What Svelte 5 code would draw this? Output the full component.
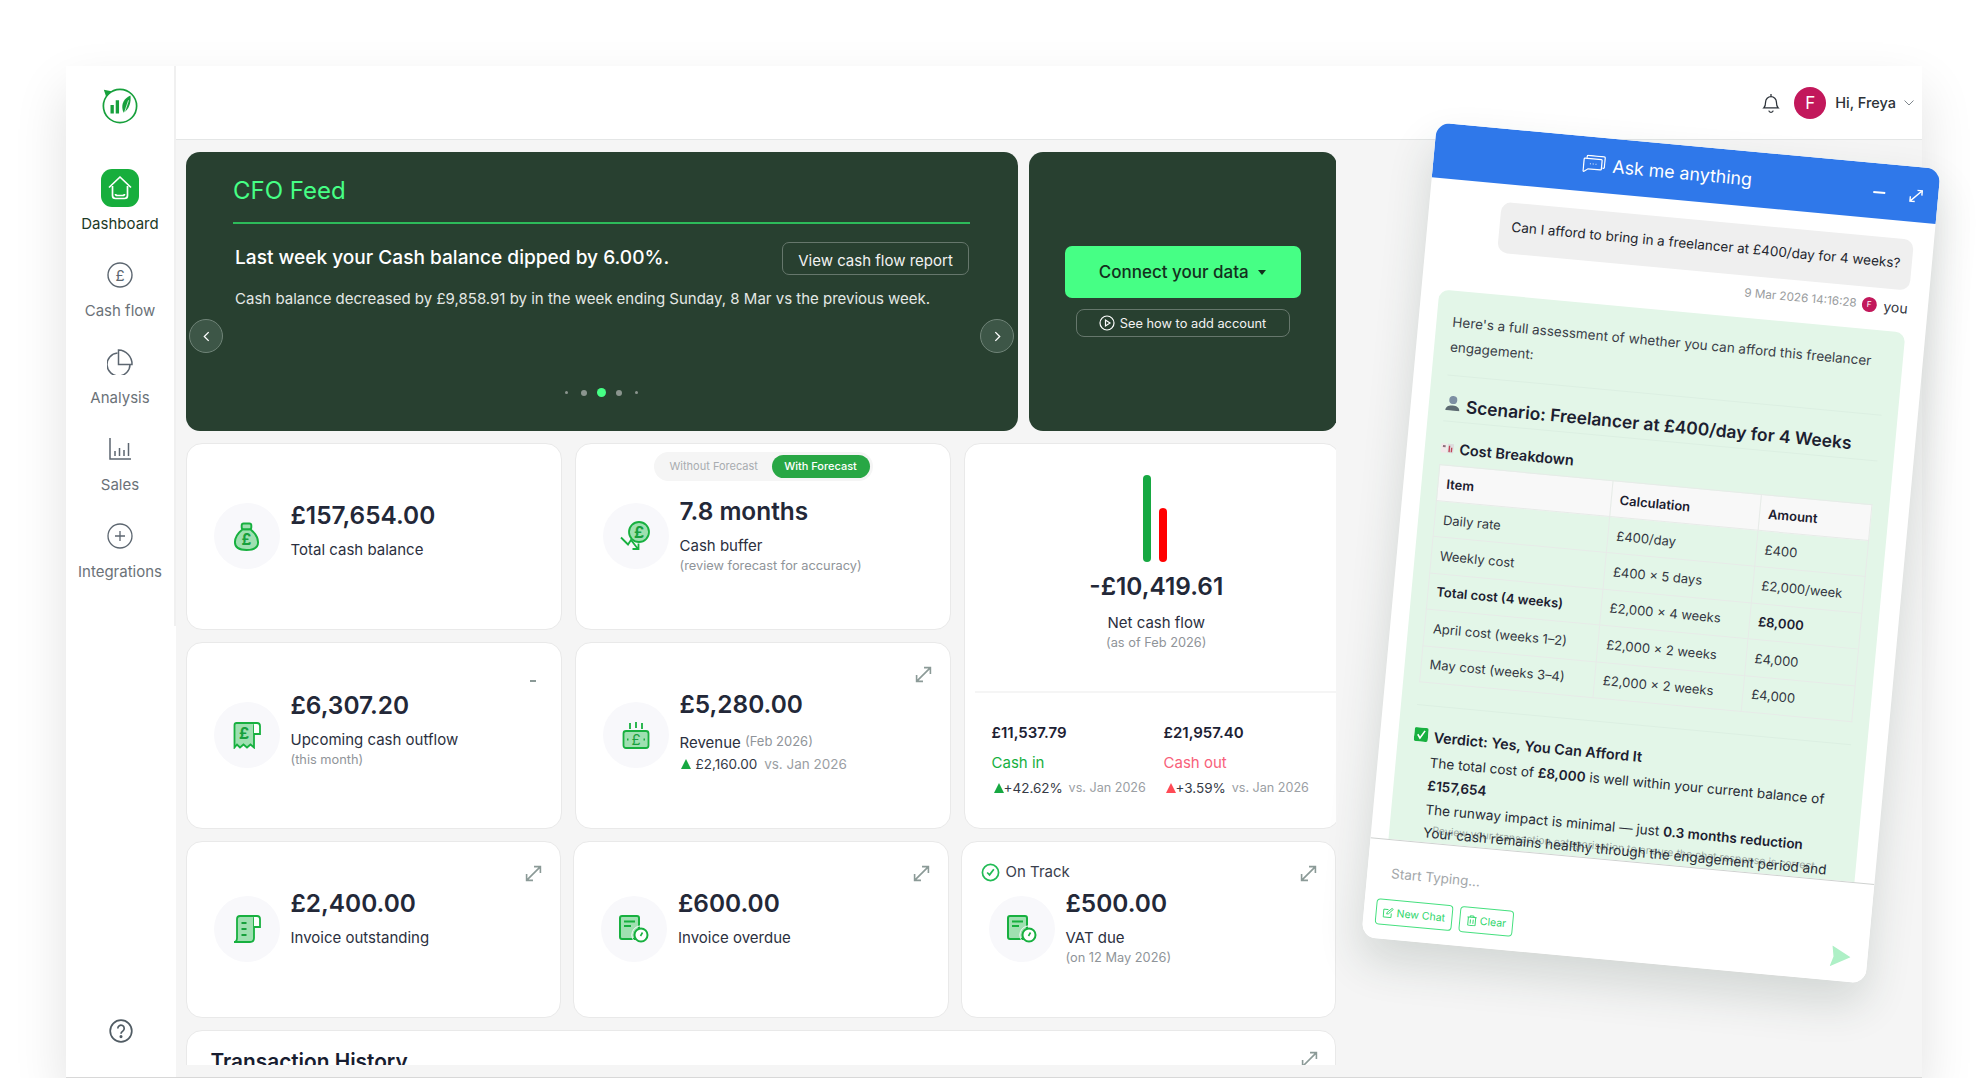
<script>
  const nav = [
    { label: 'Dashboard', icon: 'home', active: true },
    { label: 'Cash flow', icon: 'pound' },
    { label: 'Analysis', icon: 'pie' },
    { label: 'Sales', icon: 'bars' },
    { label: 'Integrations', icon: 'plus' }
  ];

  const costRows = [
    { item: 'Daily rate', calc: '£400/day', amount: '£400' },
    { item: 'Weekly cost', calc: '£400 × 5 days', amount: '£2,000/week' },
    { item: 'Total cost (4 weeks)', calc: '£2,000 × 4 weeks', amount: '£8,000', strong: true },
    { item: 'April cost (weeks 1–2)', calc: '£2,000 × 2 weeks', amount: '£4,000' },
    { item: 'May cost (weeks 3–4)', calc: '£2,000 × 2 weeks', amount: '£4,000' }
  ];

  const dots = ['s', 'm', 'on', 'm', 's'];
</script>

{#snippet expand()}
  <svg class="expand" viewBox="0 0 16 16" width="17" height="17" fill="none" stroke="#8b9a97" stroke-width="1.5">
    <path d="M1.5 14.5 14.5 1.5M8.5 1.5h6v6M1.5 8.5v6h6" />
  </svg>
{/snippet}

{#snippet docClock()}
  <svg viewBox="0 0 30 28" width="30" height="28" fill="none">
    <rect x="1" y="1" width="19" height="23" rx="2" fill="#9fe0b1" stroke="#17b03f" stroke-width="2" />
    <path d="M5 6.5h11M5 11h7" stroke="#17b03f" stroke-width="2" />
    <circle cx="22" cy="20" r="6.5" fill="#fff" stroke="#17b03f" stroke-width="2" />
    <circle cx="22" cy="20" r="9.2" stroke="#f8f8fb" stroke-width="1" />
    <path d="M21.5 21 23.5 17.5" stroke="#17b03f" stroke-width="1.6" />
  </svg>
{/snippet}

<div class="page">
  <div class="app">
    <aside class="side">
      <div class="rail">
        <svg class="logo" viewBox="0 0 40 40" width="38" height="38" fill="none">
          <circle cx="20" cy="20" r="17.5" stroke="#17a03c" stroke-width="1.8" />
          <path d="M3 3 11 4.5 5.5 10.5Z" fill="#17a03c" />
          <path d="M10 19h3.500v9H10zM15.500 14H19v14h-3.500z" fill="#17a03c" />
          <path d="M31 9c-7 3-10 9-8 16l1 2c5-3 8-10 7-18Z" fill="#17a03c" />
          <path d="M23 32 29 14" stroke="#fff" stroke-width=".8" />
        </svg>
        <nav class="nav">
          {#each nav as n}
            <div class="nav-item" class:active={n.active}>
              <div class="nav-icon">
                {#if n.icon === 'home'}
                  <svg viewBox="0 0 26 26" width="26" height="26" fill="none" stroke="#fff" stroke-width="1.7" stroke-linejoin="round">
                    <path d="M2 12.500 13 2l11 10.500" />
                    <path d="M5.500 11v9.500q0 3 3 3h9q3 0 3-3V11M8.500 19q0 1.500 2 1.500h5q2 0 2-1.500" />
                  </svg>
                {:else if n.icon === 'pound'}
                  <svg viewBox="0 0 26 26" width="26" height="26" fill="none" stroke="#5c6670" stroke-width="1.4">
                    <circle cx="13" cy="13" r="12" />
                    <text x="13" y="18.500" text-anchor="middle" class="svg-pound" fill="#5c6670" stroke="none">£</text>
                  </svg>
                {:else if n.icon === 'pie'}
                  <svg viewBox="0 0 26 26" width="26" height="26" fill="none" stroke="#5c6670" stroke-width="1.5">
                    <path d="M10.500 4A11.500 11.500 0 1 0 23 15.500" />
                    <path d="M11.500 1v14.500H25A14 14 0 0 0 11.500 1Z" />
                  </svg>
                {:else if n.icon === 'bars'}
                  <svg viewBox="0 0 24 24" width="24" height="24" fill="none" stroke="#5c6670" stroke-width="1.5">
                    <path d="M2 1v21h21M7 14v5M11.500 11v8M16 13v6M20.500 6v13" />
                  </svg>
                {:else}
                  <svg viewBox="0 0 26 26" width="26" height="26" fill="none" stroke="#5c6670" stroke-width="1.3">
                    <circle cx="13" cy="13" r="12" />
                    <path d="M13 8v10M8 13h10" />
                  </svg>
                {/if}
              </div>
              <span>{n.label}</span>
            </div>
          {/each}
        </nav>
      </div>
      <svg class="help" viewBox="0 0 24 24" width="24" height="24" fill="none" stroke="#515c64" stroke-width="1.7">
        <circle cx="12" cy="12" r="10.800" />
        <path d="M8.800 9.500a3.200 3.200 0 1 1 5 2.600c-1.100.8-1.800 1.300-1.800 2.600" />
        <circle cx="12" cy="17.600" r=".7" fill="#515c64" />
      </svg>
    </aside>

    <div class="main">
      <header class="top">
        <svg viewBox="0 0 20 22" width="18" height="20" fill="none" stroke="#2b3138" stroke-width="1.4">
          <path d="M2 16.500c1.500-1.500 2-3 2-6.500a6 6 0 0 1 12 0c0 3.500.5 5 2 6.500ZM10 1v3M7.500 19.500a2.600 2.600 0 0 0 5 0" />
        </svg>
        <div class="avatar">F</div>
        <span class="hi">Hi, Freya</span>
        <svg viewBox="0 0 10 6" width="10" height="6" fill="none" stroke="#7f878d" stroke-width="1">
          <path d="M.5.5 5 5 9.500.5" />
        </svg>
      </header>

      <div class="content">
        <div class="hero">
          <section class="feed">
            <h2>CFO Feed</h2>
            <div class="feed-head">
              <h3>Last week your Cash balance dipped by 6.00%.</h3>
              <button class="ghost">View cash flow report</button>
            </div>
            <p class="feed-text">Cash balance decreased by £9,858.91 by in the week ending Sunday, 8 Mar vs the previous week.</p>
            <div class="dots">
              {#each dots as d}
                <i class={d}></i>
              {/each}
            </div>
            <button class="arrow prev" aria-label="Previous">
              <svg viewBox="0 0 8 12" width="7" height="11" fill="none" stroke="#fff" stroke-width="1.500"><path d="M6.500 1 1.500 6l5 5" /></svg>
            </button>
            <button class="arrow next" aria-label="Next">
              <svg viewBox="0 0 8 12" width="7" height="11" fill="none" stroke="#fff" stroke-width="1.500"><path d="m1.500 1 5 5-5 5" /></svg>
            </button>
          </section>
          <section class="connect">
            <button class="connect-btn">Connect your data <i class="caret"></i></button>
            <button class="howto">
              <svg viewBox="0 0 16 16" width="16" height="16" fill="none" stroke="#fff" stroke-width="1.200">
                <circle cx="8" cy="8" r="7" />
                <path d="M6.500 5v6L11 8Z" />
              </svg>
              See how to add account
            </button>
          </section>
        </div>

        <div class="grid">
          <div class="card stat">
            <div class="circle">
              <svg viewBox="0 0 28 30" width="27" height="29" fill="none" stroke="#17b03f" stroke-width="2">
                <path d="M10 7.500C5 11.500 2 16 2 21c0 6 4 8 12 8s12-2 12-8c0-5-3-9.500-8-13.500Z" fill="#9fe0b1" />
                <rect x="9" y="1.500" width="10" height="6" rx="2" fill="#9fe0b1" />
                <text x="14" y="24" text-anchor="middle" class="svg-pound-b" fill="#17a03c" stroke="none">£</text>
              </svg>
            </div>
            <div class="txt pb11">
              <div class="amount">£157,654.00</div>
              <div class="label">Total cash balance</div>
            </div>
          </div>

          <div class="card stat">
            <div class="toggle">
              <span>Without Forecast</span>
              <span class="on">With Forecast</span>
            </div>
            <div class="circle">
              <svg viewBox="0 0 31 30" width="31" height="30" fill="none" stroke="#17b03f" stroke-width="1.800">
                <circle cx="19" cy="11" r="10" fill="#9fe0b1" />
                <text x="19" y="17" text-anchor="middle" class="svg-pound-b" fill="#17a03c" stroke="none">£</text>
                <path d="M1 16.500 8 23.500 11 19 18 28M12.500 28H18.500V22.500" />
              </svg>
            </div>
            <div class="txt pb3">
              <div class="amount">7.8 months</div>
              <div class="label">Cash buffer</div>
              <div class="sub">(review forecast for accuracy)</div>
            </div>
          </div>

          <div class="card net">
            <div class="net-top">
              <div class="candles">
                <i class="g"></i>
                <i class="r"></i>
              </div>
              <div class="amount">-£10,419.61</div>
              <div class="label">Net cash flow</div>
              <div class="sub">(as of Feb 2026)</div>
            </div>
            <div class="net-bottom">
              <div>
                <b>£11,537.79</b>
                <div class="flow in">Cash in</div>
                <div class="chg"><i class="up"></i>+42.62% <em>vs. Jan 2026</em></div>
              </div>
              <div>
                <b>£21,957.40</b>
                <div class="flow out">Cash out</div>
                <div class="chg"><i class="up red"></i>+3.59% <em>vs. Jan 2026</em></div>
              </div>
            </div>
          </div>

          <div class="card stat">
            <span class="dash"></span>
            <div class="circle">
              <svg viewBox="0 0 28 27" width="28" height="27" fill="none" stroke="#17b03f" stroke-width="1.800">
                <path d="M1.500 25.500V3q0-2 2-2H24q-3 0-3 3.500v21l-3.500-3-3.500 3-3.500-3-3.500 3-3-3Z" fill="#9fe0b1" />
                <path d="M21 1h3q3 0 3 3v8h-6" fill="#fff" />
                <text x="11" y="17" text-anchor="middle" class="svg-pound-b" fill="#17a03c" stroke="none">£</text>
              </svg>
            </div>
            <div class="txt pb13">
              <div class="amount">£6,307.20</div>
              <div class="label">Upcoming cash outflow</div>
              <div class="sub">(this month)</div>
            </div>
          </div>

          <div class="card stat">
            {@render expand()}
            <div class="circle">
              <svg viewBox="0 0 28 27" width="28" height="27" fill="none" stroke="#17b03f" stroke-width="1.800">
                <path d="M8 1v6M14 0v6M20 1v6" />
                <rect x="1.500" y="9" width="25" height="17" rx="2.500" fill="#9fe0b1" />
                <text x="14" y="22.500" text-anchor="middle" class="svg-pound" fill="#17a03c" stroke="none">£</text>
                <path d="M5 17.500h1.500M21.500 17.500H23" stroke-width="2" />
              </svg>
            </div>
            <div class="txt pb8">
              <div class="amount">£5,280.00</div>
              <div class="label rev">Revenue <span>(Feb 2026)</span></div>
              <div class="chg"><i class="up"></i>£2,160.00 <em>vs. Jan 2026</em></div>
            </div>
          </div>
        </div>

        <div class="row3">
          <div class="card stat">
            {@render expand()}
            <div class="circle">
              <svg viewBox="0 0 28 28" width="28" height="28" fill="none" stroke="#17b03f" stroke-width="1.800">
                <path d="M4 4q0-3 3-3h17q-3 0-3 3v19q0 4-4 4H1q3 0 3-4Z" fill="#9fe0b1" />
                <path d="M21 1h3q3 0 3 3v8h-6" fill="#fff" />
                <path d="M8.500 8h5M8.500 14h5M8.500 20h5" stroke="#17a03c" stroke-width="2" />
              </svg>
            </div>
            <div class="txt pb22">
              <div class="amount">£2,400.00</div>
              <div class="label">Invoice outstanding</div>
            </div>
          </div>

          <div class="card stat">
            {@render expand()}
            <div class="circle">{@render docClock()}</div>
            <div class="txt pb22">
              <div class="amount">£600.00</div>
              <div class="label">Invoice overdue</div>
            </div>
          </div>

          <div class="card stat">
            <div class="track">
              <svg viewBox="0 0 20 20" width="19" height="19" fill="none" stroke="#22bb55" stroke-width="1.800">
                <circle cx="10" cy="10" r="8.500" />
                <path d="M6.500 10 9 12.500 13.500 6.500" />
              </svg>
              On Track
            </div>
            {@render expand()}
            <div class="circle">{@render docClock()}</div>
            <div class="txt pb4">
              <div class="amount">£500.00</div>
              <div class="label">VAT due</div>
              <div class="sub">(on 12 May 2026)</div>
            </div>
          </div>
        </div>

        <div class="card history">
          <h4>Transaction History</h4>
          {@render expand()}
        </div>
      </div>
    </div>

    <div class="chat">
      <div class="chat-head">
        <svg viewBox="0 0 24 20" width="23" height="19" fill="none" stroke="#fff" stroke-width="1.300">
          <path d="M4 3.500V2q0-1 1-1h17q1 0 1 1v10q0 1-1 1h-1" />
          <path d="M2 4h17q1 0 1 1v9q0 1-1 1H6l-4 3q-1 .5-1-1V5q0-1 1-1Z" />
          <path d="M7.500 9.500h.8M10.500 9.500h.8M13.500 9.500h.8" />
        </svg>
        <span>Ask me anything</span>
        <i class="min"></i>
        <svg class="chat-expand" viewBox="0 0 16 16" width="14" height="14" fill="none" stroke="#fff" stroke-width="1.600">
          <path d="M1.500 14.500 14.500 1.500M9 1.500h5.500V7M1.500 9v5.500H7" />
        </svg>
      </div>

      <div class="chat-body">
        <div class="ask">Can I afford to bring in a freelancer at £400/day for 4 weeks?</div>
        <div class="meta">
          <span>9 Mar 2026 14:16:28</span>
          <i class="mini">F</i>
          <b>you</b>
        </div>

        <div class="reply">
          <p class="intro">Here's a full assessment of whether you can afford this freelancer engagement:</p>
          <hr />
          <h5>
            <svg viewBox="0 0 16 16" width="16" height="16">
              <circle cx="8" cy="5" r="4" fill="#7d8fa3" />
              <path d="M1 15.500c0-3.500 3-5 7-5s7 1.500 7 5Z" fill="#5d6b72" />
            </svg>
            Scenario: Freelancer at £400/day for 4 Weeks
          </h5>
          <hr class="tight" />
          <h6>
            <svg viewBox="0 0 14 12" width="13" height="11">
              <path d="M0 1h6.500v10H0z" fill="#f2e9ea" />
              <path d="M7.500 1H14v10H7.500z" fill="#ddd" />
              <path d="M8.500 3h1.500v7H8.500zM11 5h1.500v5H11z" fill="#c2455a" />
              <path d="M2 3h3v2H2z" fill="#8b6f7a" />
            </svg>
            Cost Breakdown
          </h6>
          <table>
            <thead>
              <tr><th>Item</th><th>Calculation</th><th>Amount</th></tr>
            </thead>
            <tbody>
              {#each costRows as r}
                <tr>
                  <td class:bold={r.strong}>{r.item}</td>
                  <td>{r.calc}</td>
                  <td class:bold={r.strong}>{r.amount}</td>
                </tr>
              {/each}
            </tbody>
          </table>
          <hr class="after-table" />
          <h6 class="verdict">
            <svg viewBox="0 0 14 14" width="14" height="14">
              <rect width="14" height="14" rx="2" fill="#17b03f" />
              <path d="M3.500 7 6 10.500 10.500 3" fill="none" stroke="#fff" stroke-width="1.600" />
            </svg>
            Verdict: Yes, You Can Afford It
          </h6>
          <div class="points">
            <p>The total cost of <b>£8,000</b> is well within your current balance of <b>£157,654</b></p>
            <p>The runway impact is minimal — just <b>0.3 months reduction</b></p>
            <p>Your cash remains healthy through the engagement period and</p>
          </div>
        </div>
      </div>

      <div class="faint">Review your transaction categorisation to ensure the chat response is correct</div>

      <div class="chat-input">
        <div class="placeholder">Start Typing...</div>
        <div class="chat-actions">
          <button>
            <svg viewBox="0 0 12 12" width="11" height="11" fill="none" stroke="#2fd66b" stroke-width="1">
              <path d="M9.500 6.500V11H1V2.500h5M4.500 7.500 5 5.500 10 .8l1.200 1.200L6.500 7Z" />
            </svg>
            New Chat
          </button>
          <button>
            <svg viewBox="0 0 12 12" width="11" height="11" fill="none" stroke="#2fd66b" stroke-width="1">
              <path d="M1 2.500h10M4 2.500V1h4v1.500M2 2.500V11.500h8V2.500M4.500 5v4.500M7.500 5v4.500" />
            </svg>
            Clear
          </button>
        </div>
        <svg class="send" viewBox="0 0 20 21" width="20" height="21">
          <path d="M1 0 20 10 0 21l3-10Z" fill="#aef0c6" />
        </svg>
      </div>
    </div>
  </div>
</div>

<style>
  :global(body) {
    margin: 0;
    background: #fff;
    font-family: Inter, "Liberation Sans", sans-serif;
    color: #232838;
  }

  .page {
    height: 1078px;
    padding: 66px 64px 0 66px;
    box-sizing: border-box;
    overflow: hidden;
  }

  .app {
    position: relative;
    display: flex;
    height: 1012px;
    background: #f5f5f5;
    border-bottom: 1px solid #d8d8d8;
    box-sizing: border-box;
    box-shadow: 0 24px 50px rgba(0, 0, 0, 0.12);
  }

  button {
    font-family: inherit;
    cursor: pointer;
  }

  /* sidebar */
  .side {
    width: 110px;
    flex: none;
    background: #fff;
    display: flex;
    flex-direction: column;
    justify-content: space-between;
    align-items: center;
    padding-bottom: 34px;
    box-sizing: border-box;
  }
  .rail {
    width: 100%;
    height: 560px;
    padding-top: 21px;
    box-sizing: border-box;
    border-right: 2px solid #f0f0f0;
    display: flex;
    flex-direction: column;
    align-items: center;
  }
  .logo { flex: none; }
  .nav {
    margin-top: 44px;
    display: flex;
    flex-direction: column;
    align-items: center;
  }
  .nav-item {
    height: 87px;
    display: flex;
    flex-direction: column;
    align-items: center;
    gap: 7px;
    font-size: 15px;
    line-height: 20px;
    color: #6b7278;
  }
  .nav-item.active { color: #1c3a26; }
  .nav-icon {
    width: 38px;
    height: 38px;
    border-radius: 11px;
    display: flex;
    align-items: center;
    justify-content: center;
  }
  .active .nav-icon { background: #17ae3d; }
  .svg-pound { font: 400 15px Inter, sans-serif; }
  .svg-pound-b { font: 700 16px Inter, sans-serif; }

  /* top bar */
  .main {
    flex: 1;
    min-width: 0;
    display: flex;
    flex-direction: column;
  }
  .top {
    height: 74px;
    flex: none;
    box-sizing: border-box;
    background: #fff;
    border-bottom: 1px solid #e4e6e6;
    display: flex;
    align-items: center;
    justify-content: flex-end;
    padding: 0 8px 0 0;
  }
  .avatar {
    width: 32px;
    height: 32px;
    margin: 0 9px 0 14px;
    border-radius: 50%;
    background: #c2185b;
    color: #fff;
    font-size: 17px;
    line-height: 32px;
    text-align: center;
  }
  .hi {
    font-size: 14.500px;
    font-weight: 500;
    color: #2c3238;
    margin-right: 8px;
  }

  /* page content */
  .content {
    width: 1160px;
    height: 925px;
    padding: 12px 0 0 9.500px;
    box-sizing: border-box;
    overflow: hidden;
  }
  .hero {
    display: flex;
    gap: 10.500px;
    height: 279px;
  }
  .feed, .connect {
    background: #284030;
    border-radius: 14px;
    box-sizing: border-box;
  }
  .feed {
    position: relative;
    width: 832.500px;
    flex: none;
    padding: 24px 47px 0 47.500px;
  }
  .feed h2 {
    margin: 0;
    width: 737px;
    padding-bottom: 16px;
    border-bottom: 2px solid #2dbb5a;
    font-size: 24px;
    line-height: 30px;
    font-weight: 400;
    color: #46ff85;
  }
  .feed-head {
    width: 736px;
    margin-top: 18px;
    padding-left: 2px;
    box-sizing: border-box;
    display: flex;
    align-items: center;
    justify-content: space-between;
  }
  .feed h3 {
    margin: 0 0 3px;
    font-size: 19.100px;
    font-weight: 500;
    color: #fff;
    white-space: nowrap;
  }
  .ghost {
    width: 187px;
    height: 33px;
    padding: 3px 0 0;
    background: transparent;
    border: 1px solid #66776c;
    border-radius: 7px;
    color: #f2f2f2;
    font-size: 15px;
  }
  .feed-text {
    margin: 13px 0 0 2px;
    font-size: 15px;
    line-height: 22px;
    color: #e4e8e5;
    white-space: nowrap;
  }
  .dots {
    margin-top: 78px;
    display: flex;
    align-items: center;
    justify-content: center;
    gap: 10px;
    width: 737px;
    height: 9px;
  }
  .dots i {
    border-radius: 50%;
    background: #8b958e;
  }
  .dots .s { width: 3px; height: 3px; margin: 0 3px; }
  .dots .m { width: 6px; height: 6px; }
  .dots .on { width: 9px; height: 9px; background: #46ff85; }
  .arrow {
    position: absolute;
    top: 167px;
    width: 34px;
    height: 34px;
    padding: 0;
    border-radius: 50%;
    background: #3d5647;
    border: 1px solid #6f8377;
    display: flex;
    align-items: center;
    justify-content: center;
  }
  .prev { left: 3.500px; }
  .next { right: 4px; }
  .connect {
    flex: none;
    width: 308px;
    display: flex;
    flex-direction: column;
    align-items: center;
    justify-content: center;
    gap: 11px;
  }
  .connect-btn {
    width: 236px;
    height: 52px;
    border: none;
    border-radius: 7px;
    background: #46ff85;
    color: #13301d;
    font-size: 17px;
    font-weight: 500;
  }
  .caret {
    display: inline-block;
    margin-left: 5px;
    vertical-align: 3px;
    border-left: 4.500px solid transparent;
    border-right: 4.500px solid transparent;
    border-top: 5px solid #13301d;
  }
  .howto {
    width: 214px;
    height: 28px;
    padding: 0;
    background: transparent;
    border: 1px solid #66776c;
    border-radius: 8px;
    color: #f2f2f2;
    font-size: 12.800px;
    display: flex;
    align-items: center;
    justify-content: center;
    gap: 5px;
  }

  /* stat cards */
  .card {
    position: relative;
    background: #fff;
    border: 1px solid #e9e9e9;
    border-radius: 16px;
    box-sizing: border-box;
  }
  .grid {
    margin-top: 11.500px;
    display: grid;
    grid-template-columns: repeat(3, 376.500px);
    grid-template-rows: 187px 187px;
    gap: 12px 12.500px;
  }
  .row3 {
    margin-top: 12.500px;
    display: grid;
    grid-template-columns: repeat(3, 375.500px);
    gap: 12px;
    height: 176.500px;
  }
  .stat {
    display: flex;
    align-items: center;
    gap: 11px;
    padding-left: 27px;
  }
  .circle {
    width: 66px;
    height: 66px;
    flex: none;
    border-radius: 50%;
    background: #f8f8fb;
    display: flex;
    align-items: center;
    justify-content: center;
  }
  .amount {
    font-size: 24.400px;
    line-height: 30px;
    font-weight: 600;
    color: #232838;
  }
  .label {
    margin-top: 9px;
    font-size: 15px;
    line-height: 22px;
    color: #2b3040;
  }
  .sub {
    font-size: 12.800px;
    line-height: 17px;
    color: #8f9499;
  }
  .pb3 { padding-bottom: 3px; }
  .pb4 { padding-bottom: 4px; }
  .pb8 { padding-bottom: 8px; }
  .pb11 { padding-bottom: 11px; }
  .pb13 { padding-bottom: 13px; }
  .pb22 { padding-bottom: 22px; }
  .rev { margin-top: 11px; }
  .rev span {
    font-size: 13px;
    color: #8f9499;
    vertical-align: 2px;
  }
  .chg {
    font-size: 13.500px;
    line-height: 20px;
    color: #353a46;
    display: flex;
    align-items: center;
    white-space: pre;
  }
  .chg em {
    font-style: normal;
    color: #9a9ea3;
    margin-left: 3px;
  }
  .up {
    width: 0;
    height: 0;
    margin: 0 5px 0 1px;
    border-left: 5.500px solid transparent;
    border-right: 5.500px solid transparent;
    border-bottom: 10px solid #17a842;
  }
  .up.red { border-bottom-color: #ff4a55; }
  .expand {
    position: absolute;
    top: 23px;
    right: 18px;
  }
  .dash {
    position: absolute;
    top: 37px;
    left: 343px;
    width: 6px;
    height: 2px;
    background: #8b9a97;
  }
  .toggle {
    position: absolute;
    top: 8px;
    left: 78px;
    width: 219px;
    height: 29px;
    padding: 3px;
    box-sizing: border-box;
    border-radius: 15px;
    background: #f5f5f5;
    display: flex;
    align-items: center;
    justify-content: space-between;
    font-size: 11px;
    color: #a8acb0;
  }
  .toggle span { padding-left: 13px; }
  .toggle .on {
    width: 98px;
    height: 23px;
    padding: 0;
    border-radius: 12px;
    background: #28a745;
    color: #fff;
    line-height: 23px;
    text-align: center;
    font-weight: 500;
  }
  .track {
    position: absolute;
    top: 20px;
    left: 19px;
    display: flex;
    align-items: center;
    gap: 6px;
    font-size: 15px;
    line-height: 20px;
    color: #3a404d;
  }

  /* net cash flow */
  .net {
    grid-column: 3;
    grid-row: 1 / span 2;
    display: flex;
    flex-direction: column;
  }
  .net-top {
    height: 249px;
    padding: 31px 10px 0 9px;
    margin-left: 10px;
    box-sizing: border-box;
    text-align: center;
    border-bottom: 2px solid #f5f5f5;
  }
  .candles {
    height: 87px;
    display: flex;
    justify-content: center;
    align-items: flex-end;
    gap: 8px;
    padding-right: 3px;
  }
  .candles i {
    width: 8px;
    border-radius: 4px;
  }
  .candles .g { height: 87px; background: #17a842; }
  .candles .r { height: 54px; background: #f00; }
  .net-top .amount { margin-top: 9px; }
  .net-top .label { margin-top: 11px; }
  .net-bottom {
    padding: 30px 0 0 27px;
    display: grid;
    grid-template-columns: 172px 172px;
    font-size: 15px;
  }
  .net-bottom b {
    display: block;
    line-height: 20px;
    font-weight: 600;
    color: #1c2133;
  }
  .flow {
    margin-top: 9px;
    line-height: 22px;
  }
  .in { color: #17b03f; }
  .out { color: #f8617a; }
  .net-bottom .chg {
    margin-top: 4px;
    padding-left: 1px;
  }
  .net-bottom .up { margin-right: 0; }
  .net-bottom em { font-size: 12.600px; margin-left: 2px; }

  .history {
    margin-top: 12px;
    height: 200px;
    width: 1150px;
    padding: 18px 24px;
  }
  .history h4 {
    margin: 0;
    font-size: 20.800px;
    line-height: 26px;
    font-weight: 600;
    color: #181d30;
  }
  .history .expand { top: 20px; right: 17px; }

  /* floating chat, tilted over the dashboard */
  .chat {
    position: absolute;
    left: 1332px;
    top: 78px;
    width: 506px;
    height: 818px;
    display: flex;
    flex-direction: column;
    background: #fff;
    border-radius: 14px;
    overflow: hidden;
    transform: rotate(5.300deg);
    box-shadow: 0 22px 44px rgba(40, 60, 50, 0.16);
  }
  .chat-head {
    position: relative;
    height: 55px;
    flex: none;
    background: #2f78ea;
    color: #fff;
    display: flex;
    align-items: center;
    justify-content: center;
    gap: 7px;
    font-size: 17.800px;
    padding-right: 38px;
  }
  .min {
    position: absolute;
    left: 441px;
    top: 28px;
    width: 12px;
    height: 2px;
    background: #fff;
  }
  .chat-expand {
    position: absolute;
    left: 477px;
    top: 22px;
  }
  .chat-body {
    height: 663px;
    flex: none;
    padding-top: 18px;
    box-sizing: border-box;
    overflow: hidden;
  }
  .ask {
    width: 414px;
    height: 51px;
    margin-left: 72px;
    padding: 0 12px;
    box-sizing: border-box;
    border-radius: 10px;
    background: #efefef;
    font-size: 13.500px;
    line-height: 49px;
    color: #23262e;
    white-space: nowrap;
  }
  .meta {
    height: 20px;
    margin: 7px 20px 0 0;
    display: flex;
    align-items: center;
    justify-content: flex-end;
    font-size: 11.700px;
    color: #9a9da0;
  }
  .mini {
    width: 15px;
    height: 15px;
    margin: 0 7px 0 5px;
    border-radius: 50%;
    background: #c2185b;
    color: #fff;
    font-size: 8px;
    font-style: normal;
    line-height: 15px;
    text-align: center;
  }
  .meta b {
    font-size: 14px;
    font-weight: 400;
    color: #34383f;
  }
  .reply {
    width: 468px;
    margin: 15px 0 0 18px;
    padding: 19px 16px 0;
    box-sizing: border-box;
    border-radius: 10px 10px 0 0;
    background: #e3f6e8;
    color: #282c36;
  }
  .intro {
    margin: 0;
    font-size: 13.500px;
    line-height: 25px;
    color: #3b3f49;
  }
  hr {
    margin: 15px 0 0;
    border: none;
    border-top: 1px solid #dcefe2;
  }
  h5 {
    margin: 16px 0 0;
    font-size: 17.400px;
    line-height: 28px;
    font-weight: 600;
    color: #1c2030;
    white-space: nowrap;
  }
  h5 svg { margin-right: 1px; vertical-align: 1px; }
  hr.tight { margin-top: 1px; }
  h6 {
    margin: 16px 0 0;
    font-size: 14.500px;
    line-height: 22px;
    font-weight: 600;
    color: #1c2030;
    white-space: nowrap;
  }
  h6 svg { margin-right: 2px; }
  table {
    width: 435px;
    margin-top: 5px;
    border-collapse: collapse;
    table-layout: fixed;
    font-size: 13px;
    color: #333742;
  }
  th {
    height: 36px;
    background: #f8f8f8;
    font-weight: 600;
    text-align: left;
    color: #1c2030;
  }
  th, td {
    padding: 0 8px;
    box-sizing: border-box;
    border: 1px solid #e7ebe8;
    white-space: nowrap;
  }
  th:nth-child(1) { width: 174px; }
  th:nth-child(2) { width: 149px; }
  td { height: 36.400px; }
  .bold { font-weight: 600; color: #1c2030; }
  hr.after-table { margin-top: 22px; }
  h6.verdict {
    margin-top: 19px;
    font-size: 14.400px;
    line-height: 24px;
  }
  .points {
    padding: 2px 0 0 18px;
    font-size: 13.600px;
    line-height: 23.500px;
  }
  .points p { margin: 0; }
  .points b { font-weight: 600; color: #1c2030; }
  .faint {
    position: absolute;
    left: 0;
    right: 0;
    top: 699px;
    text-align: center;
    font-size: 10.500px;
    line-height: 14px;
    color: rgba(60, 64, 70, 0.45);
    white-space: nowrap;
  }
  .chat-input {
    position: relative;
    flex: 1;
    border-top: 1px solid #cfd2d0;
    background: #fff;
    padding: 24px 0 0 12px;
  }
  .placeholder {
    padding-left: 12px;
    font-size: 13.500px;
    line-height: 18px;
    color: #a3a7aa;
  }
  .chat-actions {
    margin-top: 17px;
    display: flex;
    gap: 7px;
  }
  .chat-actions button {
    height: 26px;
    padding: 0 6px;
    border: 1px solid #46e07f;
    border-radius: 4px;
    background: #fff;
    color: #2fd66b;
    font-size: 10.500px;
    display: flex;
    align-items: center;
    gap: 3px;
  }
  .send {
    position: absolute;
    right: 17px;
    top: 64px;
  }
</style>
